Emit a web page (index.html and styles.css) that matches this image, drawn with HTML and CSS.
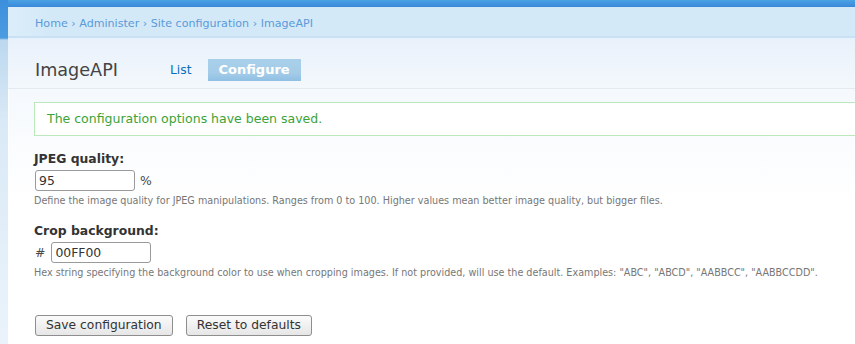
FILE: index.html
```html
<!DOCTYPE html>
<html>
<head>
<meta charset="utf-8">
<link rel="stylesheet" href="styles.css">
</head>
<body>
<div class="page">
  <div class="strip"></div>
  <div class="main">
    <div class="topbar"></div>
    <div class="panel">
      <div class="breadcrumb"><a href="#">Home</a> › <a href="#">Administer</a> › <a href="#">Site configuration</a> › <a href="#">ImageAPI</a></div>
      <div class="header">
        <h2 class="title">ImageAPI</h2>
        <ul class="tabs">
          <li><a class="tab" href="#">List</a></li>
          <li><a class="tab active" href="#">Configure</a></li>
        </ul>
      </div>
      <div class="content">
        <div class="messages">The configuration options have been saved.</div>
        <form class="form">
          <div class="item">
            <label class="label">JPEG quality:</label>
            <div class="row"><input class="text" type="text" value="95"><span class="suffix">%</span></div>
            <div class="description">Define the image quality for JPEG manipulations. Ranges from 0 to 100. Higher values mean better image quality, but bigger files.</div>
          </div>
          <div class="item">
            <label class="label">Crop background:</label>
            <div class="row"><span class="prefix">#</span><input class="text" type="text" value="00FF00"></div>
            <div class="description">Hex string specifying the background color to use when cropping images. If not provided, will use the default. Examples: "ABC", "ABCD", "AABBCC", "AABBCCDD".</div>
          </div>
          <div class="buttons">
            <button class="button" type="button">Save configuration</button>
            <button class="button" type="button">Reset to defaults</button>
          </div>
        </form>
      </div>
    </div>
  </div>
</div>
</body>
</html>
```
FILE: styles.css
```css
html, body {
  margin: 0;
  padding: 0;
  height: 100%;
}
body {
  font-family: "DejaVu Sans", Verdana, sans-serif;
  color: #494949;
  background: #fff;
  overflow: hidden;
}
.page {
  display: flex;
  height: 344px;
}
.strip {
  width: 8px;
  flex: none;
  background: linear-gradient(to bottom, #3c8fdc 0, #4b9be0 38px, #bcd8ef 40px, #d9e9f6 120px, #eaf3fb 344px);
}
.main {
  flex: 1;
  display: flex;
  flex-direction: column;
  min-width: 0;
}
.topbar {
  height: 7px;
  background: linear-gradient(to bottom, #4aa2e4, #3a88da);
}
.panel {
  flex: 1;
  background: linear-gradient(to bottom, #f5f9fd 82px, #fff 200px);
  box-shadow: inset 1px 0 0 #ffffff;
}
.breadcrumb {
  height: 32px;
  box-sizing: border-box;
  padding: 10px 0 0 27px;
  font-size: 11.1px;
  line-height: 14px;
  color: #5a9ad8;
  background: linear-gradient(to right, #dcedfa 0, #d4e9f8 40px, #d4e9f8 100%);
  border-bottom: 1px solid #e6f1fb;
  box-shadow: inset 0 -2px 0 #c9e0f5;
}
.breadcrumb a {
  color: #5a9ad8;
  text-decoration: none;
}
.header {
  height: 50px;
  box-sizing: border-box;
  display: flex;
  align-items: flex-end;
  padding: 0 0 8px 27px;
  background: linear-gradient(to bottom, #e9f1fb, #f3f8fc);
  border-bottom: 1px solid #e3ebf1;
}
.title {
  margin: 0 0 -1px 0;
  font-weight: normal;
  font-size: 17.6px;
  color: #444;
  line-height: 22px;
  width: 135px;
}
.tabs {
  list-style: none;
  margin: 0 0 -1px 0;
  padding: 0;
  display: flex;
  align-items: flex-end;
  gap: 16px;
}
.tab {
  display: block;
  font-size: 12.3px;
  color: #0a6fbf;
  text-decoration: none;
  line-height: 22px;
  height: 22px;
}
.tab.active {
  padding: 0 11px;
  background: linear-gradient(to bottom, #a8d0ea 0, #a4cce8 14px, #8fc0e3 22px);
  color: #fff;
  font-weight: bold;
  font-size: 13px;
}
.content {
  padding: 13px 0 0 26px;
}
.messages {
  border: 1px solid #bce9bc;
  border-right: none;
  background: #fff;
  color: #3aa33a;
  font-size: 12.5px;
  height: 32px;
  line-height: 32px;
  padding-left: 12px;
}
.form {
  padding-top: 15px;
}
.item {
  margin-bottom: 16px;
}
.label {
  display: block;
  font-weight: bold;
  font-size: 12.4px;
  color: #333;
  line-height: 16px;
  margin-bottom: 3px;
}
.row {
  display: flex;
  align-items: center;
  gap: 5px;
  height: 21px;
}
.text {
  width: 100px;
  height: 21px;
  box-sizing: border-box;
  border: 1px solid #9a9a9a;
  border-radius: 3px;
  padding: 0 3px;
  font-family: "DejaVu Sans", sans-serif;
  font-size: 12.4px;
  color: #333;
  background: #fff;
  margin: 0 0 0 1px;
}
.suffix, .prefix {
  font-size: 12.4px;
  color: #494949;
}
.prefix {
  margin-left: 1px;
}
.description {
  font-size: 9.65px;
  color: #777;
  margin-top: 4px;
  line-height: 12px;
}
.buttons {
  display: flex;
  gap: 13px;
  padding-top: 20px;
  padding-left: 1px;
}
.button {
  height: 21px;
  box-sizing: border-box;
  padding: 0 10px;
  border: 1px solid #8e8e8e;
  border-radius: 3px;
  background: linear-gradient(to bottom, #fbfbfb, #e6e6e6);
  font-family: "DejaVu Sans", sans-serif;
  font-size: 12.3px;
  color: #333;
  line-height: 19px;
}
```
